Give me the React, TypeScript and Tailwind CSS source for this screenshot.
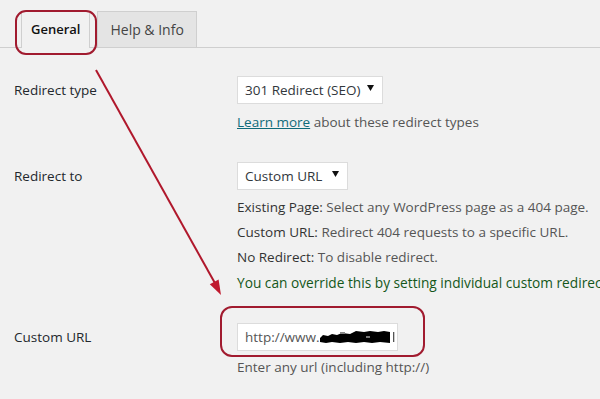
import React from "react";

const font = { fontFamily: '"Open Sans", "Noto Sans", "Liberation Sans", sans-serif' };

function Select({ label, width }: { label: string; width: string }) {
  return (
    <div
      className={`${width} h-[28px] bg-white border border-[#dcdcdc] flex items-center justify-between pl-[7px] pr-[8px] text-[13.5px] text-[#32373c]`}
    >
      <span>{label}</span>
      <svg width="7" height="6" viewBox="0 0 7 6" className="mb-[4px]">
        <path d="M0 0 L7 0 L3.5 6 Z" fill="#111" />
      </svg>
    </div>
  );
}

export default function App() {
  return (
    <div className="relative w-[600px] h-[399px] overflow-hidden bg-[#f1f1f1]" style={font}>
      {/* Tabs */}
      <div className="flex items-end gap-[7px] pl-[21px] pt-[11px] border-b border-[#cfcfcf]">
        <div className="h-[37px] -mb-px px-[9px] flex items-center border border-b-0 border-[#cfcfcf] bg-[#f1f1f1] text-[13px] font-semibold text-[#111]">
          General
        </div>
        <div className="h-[36px] px-[12px] flex items-center border border-b-0 border-[#cfcfcf] bg-[#e4e4e4] text-[14px] text-[#444]">
          Help &amp; Info
        </div>
      </div>

      {/* Form */}
      <div className="grid grid-cols-[223px_1fr] pl-[14px] pt-[28px] text-[13.5px]">
        {/* Row 1 */}
        <div className="h-[28px] flex items-center text-[#23282d]">Redirect type</div>
        <div>
          <Select label="301 Redirect (SEO)" width="w-[146px]" />
          <div className="mt-[8px] leading-[20px] text-[#555]">
            <span className="text-[#0f6b7a] underline">Learn more</span> about these redirect types
          </div>
        </div>

        {/* Row 2 */}
        <div className="mt-[30px] h-[28px] flex items-center text-[#23282d]">Redirect to</div>
        <div className="mt-[30px]">
          <Select label="Custom URL" width="w-[111px]" />
          <div className="mt-[5px] leading-[25px] text-[#555] whitespace-nowrap">
            <div>
              <span className="text-[#333]">Existing Page:</span> Select any WordPress page as a 404 page.
            </div>
            <div>
              <span className="text-[#333]">Custom URL:</span> Redirect 404 requests to a specific URL.
            </div>
            <div>
              <span className="text-[#333]">No Redirect:</span> To disable redirect.
            </div>
            <div className="text-[#14571a] text-[13.7px]">You can override this by setting individual custom redirects for each page.</div>
          </div>
        </div>

        {/* Row 3 */}
        <div className="mt-[28px] h-[28px] flex items-center text-[#23282d]">Custom URL</div>
        <div className="mt-[28px]">
          <div className="w-[161px] h-[28px] bg-white border border-[#dcdcdc] flex items-center pl-[7px] text-[13.5px] text-[#555] overflow-hidden whitespace-nowrap">
            <span>http://www.</span>
            <svg width="76" height="14" viewBox="0 0 76 14" className="shrink-0">
              <path
                d="M0 8 L3 5 L8 6 L12 4 L17 5 L22 3 L30 4 L36 1 L44 2 L50 1 L58 2 L64 1 L70 2 L70 13 L60 12 L52 13 L44 12 L36 13 L28 12 L20 13 L12 12 L6 13 L0 12 Z"
                fill="#000"
              />
              <rect x="20" y="2" width="5" height="2" fill="#888" />
              <rect x="46" y="6" width="4" height="2" fill="#777" />
              <rect x="73" y="2" width="1.3" height="10" fill="#555" />
            </svg>
          </div>
          <div className="mt-[6px] leading-[20px] text-[#555]">Enter any url (including http://)</div>
        </div>
      </div>

      {/* Annotations */}
      <div className="absolute left-[15px] top-[10px] w-[82px] h-[45px] rounded-[11px] border-2 border-[#a11b2f]" />
      <div className="absolute left-[220px] top-[306px] w-[205px] h-[51px] rounded-[12px] border-2 border-[#a11b2f]" />
      <svg className="absolute left-0 top-0" width="600" height="399" viewBox="0 0 600 399">
        <line x1="96" y1="70" x2="216" y2="285" stroke="#b0182c" strokeWidth="2" />
        <polygon points="221,295 218.6,279.4 209.8,284.2" fill="#c01a2e" />
      </svg>
    </div>
  );
}
